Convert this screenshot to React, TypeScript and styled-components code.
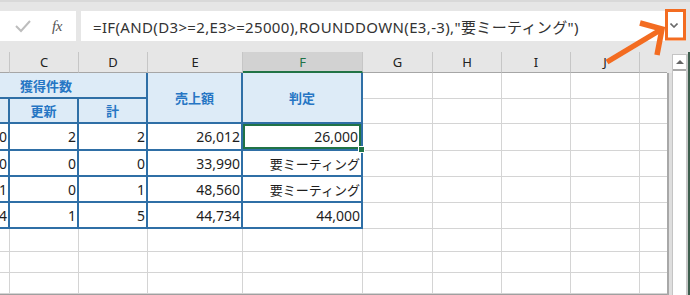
import styled, { createGlobalStyle } from 'styled-components'

const BLUE = '#2f6fa6'
const GRID = '#d4d4d4'
const GREEN = '#217346'

const thin = `1px solid ${GRID}`
const heavy = `2px solid ${BLUE}`

const GlobalStyle = createGlobalStyle`
  html, body {
    margin: 0;
    padding: 0;
    background: #e6e6e6;
  }
  body {
    font-family: "Noto Sans", "Noto Sans CJK JP", sans-serif;
  }
`

const columns = ['', 'C', 'D', 'E', 'F', 'G', 'H', 'I', 'J', '']

const rows = [
  { b: '0', c: '2', d: '2', e: '26,012', f: '26,000' },
  { b: '0', c: '0', d: '0', e: '33,990', f: '要ミーティング' },
  { b: '1', c: '0', d: '1', e: '48,560', f: '要ミーティング' },
  { b: '4', c: '1', d: '5', e: '44,734', f: '44,000' },
]

const App = () => {
  return (
    <Window>
      <GlobalStyle />
      <TopBand />
      <FormulaBar>
        <NameBox>
          <svg width="16" height="14" viewBox="0 0 16 14">
            <polyline points="1,7 6,12 15,2" fill="none" stroke="#bdbdbd" strokeWidth="2" />
          </svg>
          <Fx>fx</Fx>
        </NameBox>
        <FormulaInput>
          <FormulaText>=IF(AND(D3&gt;=2,E3&gt;=25000),ROUNDDOWN(E3,-3),"要ミーティング")</FormulaText>
          <Chevron>
            <svg width="8" height="5" viewBox="0 0 8 5">
              <polyline points="0.5,0.5 4,4 7.5,0.5" fill="none" stroke="#6a6a6a" strokeWidth="1.6" />
            </svg>
          </Chevron>
        </FormulaInput>
      </FormulaBar>
      <Spacer />
      <SheetArea>
        <Sheet>
          {columns.map((c, i) => (
            <ColHead key={'h' + i} $selected={c === 'F'} $last={i === columns.length - 1}>
              {c}
            </ColHead>
          ))}

          <HeadCell $col="1 / 4" $row="2" $bottom={heavy} $align="flex-start">
            獲得件数
          </HeadCell>
          <HeadCell $col="4" $row="2 / 4">売上額</HeadCell>
          <HeadCell $col="5" $row="2 / 4">判定</HeadCell>
          {[0, 1, 2, 3, 4].map((k) => (
            <Blank key={'r1' + k} $edge={k === 4} />
          ))}

          <HeadCell />
          <HeadCell>更新</HeadCell>
          <HeadCell>計</HeadCell>
          {[0, 1, 2, 3, 4].map((k) => (
            <Blank key={'r2' + k} $edge={k === 4} />
          ))}

          {rows.map((r, i) => [
            <DataCell key={'b' + i}>{r.b}</DataCell>,
            <DataCell key={'c' + i}>{r.c}</DataCell>,
            <DataCell key={'d' + i}>{r.d}</DataCell>,
            <DataCell key={'e' + i}>{r.e}</DataCell>,
            i === 0 ? (
              <ActiveCell key={'f' + i}>{r.f}</ActiveCell>
            ) : (
              <DataCell key={'f' + i} $jp={r.f.startsWith('要')}>
                {r.f}
              </DataCell>
            ),
            ...[0, 1, 2, 3, 4].map((k) => <Blank key={'x' + i + k} $edge={k === 4} />),
          ])}

          {[0, 1, 2].map((i) =>
            columns.map((_, k) => <Blank key={'e' + i + k} $edge={k === columns.length - 1} />)
          )}
        </Sheet>
        <Gutter />
        <Scrollbar>
          <ScrollButton>
            <UpTriangle />
          </ScrollButton>
        </Scrollbar>
        <WindowEdge />
      </SheetArea>

      <Callout width="690" height="295" viewBox="0 0 690 295">
        <rect x="666.5" y="10.5" width="18" height="28.5" fill="none" stroke="#f36c21" strokeWidth="3" />
        <polyline points="607,62 662,29" fill="none" stroke="#f36c21" strokeWidth="5.5" />
        <polyline points="640,23 662,29 657,55" fill="none" stroke="#f36c21" strokeWidth="5.5" strokeLinejoin="miter" />
      </Callout>
    </Window>
  )
}

export default App

const Window = styled.div`
  position: relative;
  width: 690px;
  height: 295px;
  display: flex;
  flex-direction: column;
  background: #e6e6e6;
  overflow: hidden;
`

const TopBand = styled.div`
  box-sizing: border-box;
  height: 11px;
  border-top: 2px solid #d9d9d9;
`

const FormulaBar = styled.div`
  display: flex;
  height: 30px;
  gap: 5px;
  padding-right: 4px;
`

const NameBox = styled.div`
  width: 76px;
  background: #fff;
  display: flex;
  align-items: center;
  padding-left: 15px;
  box-sizing: border-box;
  gap: 21px;
`

const Fx = styled.span`
  font-family: "Liberation Serif", serif;
  font-style: italic;
  font-size: 15px;
  color: #555;
  line-height: 1;
  letter-spacing: -0.5px;
`

const FormulaInput = styled.div`
  flex: 1;
  background: #fff;
  display: flex;
  align-items: center;
  justify-content: space-between;
  padding: 0 8px 0 12px;
`

const FormulaText = styled.span`
  font-size: 15px;
  color: #333;
  white-space: nowrap;
  letter-spacing: 0.35px;
`

const Chevron = styled.span`
  display: flex;
  padding-bottom: 2px;
`

const Spacer = styled.div`
  height: 11px;
`

const SheetArea = styled.div`
  display: flex;
  flex: 1;
`

const Sheet = styled.div`
  display: grid;
  grid-template-columns: 10px 69px 69px 95px 120px 70px 69px 69px 69px 27px;
  grid-template-rows: 21px 26px 25px 27px 26px 26px 26px 23px 21px 21px;
  width: 667px;
  height: 243px;
  box-sizing: border-box;
  border-bottom: 1px solid #a0a0a0;
  box-shadow: inset 1px 0 0 #a8a8a8;
`

const ColHead = styled.div<{ $selected?: boolean; $last?: boolean }>`
  box-sizing: border-box;
  display: flex;
  align-items: center;
  justify-content: center;
  font-size: 13px;
  color: ${(p) => (p.$selected ? GREEN : '#222')};
  background: ${(p) => (p.$selected ? '#d2d2d2' : '#e6e6e6')};
  border-right: ${(p) => (p.$last ? 'none' : '1px solid #c6c6c6')};
  border-bottom: ${(p) => (p.$selected ? `2px solid ${GREEN}` : '1px solid #a6a6a6')};
`

const HeadCell = styled.div<{ $col?: string; $row?: string; $bottom?: string; $align?: string }>`
  box-sizing: border-box;
  grid-column: ${(p) => p.$col ?? 'auto'};
  grid-row: ${(p) => p.$row ?? 'auto'};
  display: flex;
  align-items: center;
  justify-content: ${(p) => p.$align ?? 'center'};
  padding-left: ${(p) => (p.$align ? '20px' : '0')};
  background: #ddebf7;
  color: #2676c4;
  font-family: "Noto Sans CJK JP", sans-serif;
  font-weight: 700;
  font-size: 13px;
  border-right: ${heavy};
  border-bottom: ${(p) => p.$bottom ?? heavy};
`

const DataCell = styled.div<{ $jp?: boolean }>`
  box-sizing: border-box;
  display: flex;
  align-items: center;
  justify-content: flex-end;
  padding-right: 1px;
  overflow: hidden;
  white-space: nowrap;
  background: #fff;
  color: #1e1e1e;
  font-size: ${(p) => (p.$jp ? '13px' : '14px')};
  font-family: ${(p) => (p.$jp ? '"Noto Sans CJK JP", sans-serif' : 'inherit')};
  border-right: ${heavy};
  border-bottom: ${heavy};
`

const ActiveCell = styled(DataCell)`
  position: relative;
  z-index: 2;
  padding-right: 3px;
  overflow: visible;

  &::after {
    content: "";
    position: absolute;
    inset: 0;
    border: 2px solid ${GREEN};
  }

  &::before {
    content: "";
    position: absolute;
    right: -4px;
    bottom: -4px;
    width: 5px;
    height: 5px;
    background: ${GREEN};
    border: 1px solid #fff;
    z-index: 3;
  }
`

const Blank = styled.div<{ $edge?: boolean }>`
  box-sizing: border-box;
  background: #fff;
  border-right: ${(p) => (p.$edge ? 'none' : thin)};
  border-bottom: ${thin};
`

const Gutter = styled.div`
  width: 3px;
  margin-top: 21px;
  border-left: 2px solid #a8a8a8;
  background: #dedede;
`

const Scrollbar = styled.div`
  box-sizing: border-box;
  width: 16px;
  margin-top: 2px;
  background: #fff;
  border-left: 1px solid #c4c4c4;
  border-right: 2px solid #c8c8c8;
`

const ScrollButton = styled.div`
  height: 14px;
  display: flex;
  align-items: center;
  justify-content: center;
  border-top: 1px solid #c4c4c4;
  border-bottom: 2px solid #a9a9a9;
`

const UpTriangle = styled.span`
  width: 0;
  height: 0;
  border-left: 4px solid transparent;
  border-right: 4px solid transparent;
  border-bottom: 4px solid #666;
`

const WindowEdge = styled.div`
  width: 2px;
  background: #3d5e4e;
`

const Callout = styled.svg`
  position: absolute;
  left: 0;
  top: 0;
  pointer-events: none;
`
